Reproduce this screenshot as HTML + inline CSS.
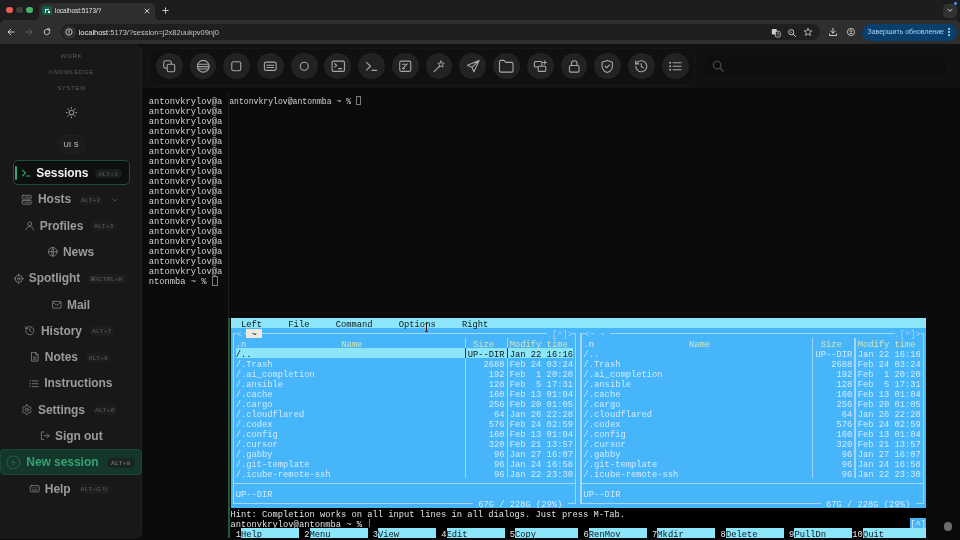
<!DOCTYPE html>
<html><head><meta charset="utf-8"><title>localhost:5173/?</title>
<style>
*{box-sizing:border-box;margin:0;padding:0}
html,body{width:960px;height:540px;overflow:hidden;background:#0b0b0b}
body{position:relative;font-family:"Liberation Sans",sans-serif;color:#ddd}
.abs{position:absolute}
.mono{font-family:"Liberation Mono",monospace;font-size:8.78px;line-height:10px;white-space:pre;letter-spacing:0}
#tabstrip{left:0;top:0;width:960px;height:20px;background:#1d1d1d}
#tab{left:38.7px;top:3.4px;width:116.6px;height:17px;background:#2e2e2e;border-radius:5px 5px 0 0}
#toolbar{left:0;top:20px;width:960px;height:24px;background:#2e2e2e;border-radius:4px 4px 0 0}
#url{left:61px;top:23.8px;width:758.5px;height:16.6px;background:#1f1f1f;border-radius:8.5px}
.tl{width:6.4px;height:6.4px;border-radius:50%;top:7px}
#sidebar{left:0;top:44px;width:142.4px;height:494.5px;background:#181818;border-radius:0 7px 7px 0;border-right:0.8px solid #212121}
.sec{font-size:6.1px;letter-spacing:0.6px;color:#5c5c5c;text-align:center;width:142px;left:0.5px}
.item{font-size:12px;font-weight:bold;color:#9a9a9a;white-space:nowrap;line-height:14px;letter-spacing:-0.05px}
.badge{font-size:6.1px;font-weight:bold;color:#505050;background:#1d1d1d;border-radius:5px;height:9.8px;line-height:10px;text-align:center;letter-spacing:0.25px;white-space:nowrap}
.ic{stroke:#8a8a8a;fill:none;stroke-width:1.6;stroke-linecap:round;stroke-linejoin:round}
.tb{width:26.8px;height:26.8px;border-radius:50%;background:#222;top:52.6px}
.tbi{stroke:#a6a6a6;fill:none;stroke-width:1.6;stroke-linecap:round;stroke-linejoin:round}
#wrap{position:absolute;left:0;top:0;width:960px;height:540px;overflow:hidden;filter:blur(0.45px)}
</style></head><body><div id="wrap">

<div id="tabstrip" class="abs"></div>
<div id="tab" class="abs"></div>
<div id="toolbar" class="abs"></div>
<div class="abs" style="left:34.6px;top:16px;width:4.2px;height:4.2px;background:radial-gradient(circle at 0 0,rgba(0,0,0,0) 4px,#2e2e2e 4.3px)"></div>
<div class="abs" style="left:155.2px;top:16px;width:4.2px;height:4.2px;background:radial-gradient(circle at 100% 0,rgba(0,0,0,0) 4px,#2e2e2e 4.3px)"></div>
<div class="abs tl" style="left:6.2px;background:#ec5f57"></div>
<div class="abs tl" style="left:16.3px;background:#3e3e3e"></div>
<div class="abs tl" style="left:26.3px;background:#42b863"></div>
<div class="abs" style="left:42.3px;top:5.8px;width:9.6px;height:9.2px;background:#135c48;border-radius:1.2px"></div>
<div class="abs" style="left:44.8px;top:9.1px;width:4.4px;height:1.3px;background:#e4f4f0"></div>
<div class="abs" style="left:44.8px;top:9.1px;width:1.3px;height:3.9px;background:#d4efe8"></div>
<div class="abs" style="left:47.9px;top:11.1px;width:1.8px;height:1.9px;background:#f0f0f0"></div>
<div class="abs" style="left:55px;top:6.5px;font-size:6.35px;color:#e4e4e4;line-height:8px;white-space:nowrap">localhost:5173/?</div>
<svg class="abs" style="left:143.5px;top:7.5px" width="6" height="6" viewBox="0 0 6 6"><path d="M1 1L5 5M5 1L1 5" stroke="#d8d8d8" stroke-width="0.9" stroke-linecap="round"/></svg>
<svg class="abs" style="left:161.5px;top:7px" width="7" height="7" viewBox="0 0 7 7"><path d="M3.5 0.8V6.2M0.8 3.5H6.2" stroke="#d8d8d8" stroke-width="0.9" stroke-linecap="round"/></svg>
<div class="abs" style="left:943.2px;top:3.8px;width:13.8px;height:13.8px;border-radius:4.5px;background:#323232"></div>
<svg class="abs" style="left:947.1px;top:8.3px" width="6" height="5" viewBox="0 0 6 5"><path d="M1 1.2L3 3.3L5 1.2" stroke="#e0e0e0" stroke-width="0.9" fill="none" stroke-linecap="round" stroke-linejoin="round"/></svg>
<div class="abs" style="left:954.4px;top:2.3px;width:2.3px;height:2.3px;border-radius:50%;background:#3d8fe8"></div>
<svg class="abs" style="left:7px;top:28px" width="8" height="8" viewBox="0 0 8 8"><path d="M7 4H1.2M3.8 1.2L1 4L3.8 6.8" stroke="#cfcfcf" stroke-width="1" fill="none" stroke-linecap="round" stroke-linejoin="round"/></svg>
<svg class="abs" style="left:25px;top:28px" width="8" height="8" viewBox="0 0 8 8"><path d="M1 4H6.8M4.2 1.2L7 4L4.2 6.8" stroke="#5e5e5e" stroke-width="1" fill="none" stroke-linecap="round" stroke-linejoin="round"/></svg>
<svg class="abs" style="left:43px;top:28px" width="8" height="8" viewBox="0 0 8 8"><path d="M6.6 4A2.7 2.7 0 1 1 5.6 1.9" stroke="#cfcfcf" stroke-width="1" fill="none" stroke-linecap="round"/><path d="M4.6 0.9H6.7V3" stroke="#cfcfcf" stroke-width="1" fill="none" stroke-linejoin="round" stroke-linecap="round"/></svg>
<div id="url" class="abs"></div>
<div class="abs" style="left:63px;top:26px;width:12.5px;height:12.5px;border-radius:50%;background:#303030"></div>
<svg class="abs" style="left:65.2px;top:28.2px" width="8" height="8" viewBox="0 0 8 8"><circle cx="4" cy="4" r="3.1" stroke="#dcdcdc" stroke-width="0.8" fill="none"/><path d="M4 2.5V4.3" stroke="#dcdcdc" stroke-width="0.8" stroke-linecap="round"/><circle cx="4" cy="5.5" r="0.45" fill="#dcdcdc"/></svg>
<div class="abs" style="left:78.7px;top:27.5px;font-size:7.47px;color:#c6c6c6;line-height:9px;white-space:nowrap"><span style="color:#ececec">localhost</span>:5173/?session=j2x82uukpv09nj0</div>
<svg class="abs" style="left:771px;top:27.5px" width="10" height="10" viewBox="0 0 10 10"><rect x="0.8" y="1" width="5" height="5.5" rx="0.8" fill="#cfcfcf"/><rect x="4.5" y="3.4" width="4.8" height="5.6" rx="0.8" fill="#2b2b2b" stroke="#cfcfcf" stroke-width="0.7"/><path d="M5.8 5.2H8M6.9 4.6V5.2M6 7.6C7 7 7.6 6.2 7.7 5.2" stroke="#cfcfcf" stroke-width="0.5" fill="none"/></svg>
<svg class="abs" style="left:787px;top:27.5px" width="10" height="10" viewBox="0 0 10 10"><circle cx="4.2" cy="4.2" r="2.6" stroke="#cfcfcf" stroke-width="0.9" fill="none"/><path d="M6.2 6.2L8.6 8.6" stroke="#cfcfcf" stroke-width="1" stroke-linecap="round"/><path d="M3.2 4.2H5.2" stroke="#cfcfcf" stroke-width="0.7"/></svg>
<svg class="abs" style="left:803px;top:27.2px" width="10" height="10" viewBox="0 0 10 10"><path d="M5 1.2L6.1 3.7L8.8 3.95L6.75 5.7L7.4 8.4L5 7L2.6 8.4L3.25 5.7L1.2 3.95L3.9 3.7Z" stroke="#cfcfcf" stroke-width="0.8" fill="none" stroke-linejoin="round"/></svg>
<svg class="abs" style="left:828px;top:27.2px" width="10" height="10" viewBox="0 0 10 10"><path d="M5 1.2V6M2.8 4L5 6.2L7.2 4M1.5 7V8.5H8.5V7" stroke="#cfcfcf" stroke-width="0.95" fill="none" stroke-linecap="round" stroke-linejoin="round"/></svg>
<svg class="abs" style="left:846px;top:27.2px" width="10" height="10" viewBox="0 0 10 10"><circle cx="5" cy="5" r="3.6" stroke="#cfcfcf" stroke-width="0.8" fill="none"/><circle cx="5" cy="4" r="1.2" stroke="#cfcfcf" stroke-width="0.7" fill="none"/><path d="M2.7 7.4C3.4 6.2 6.6 6.2 7.3 7.4" stroke="#cfcfcf" stroke-width="0.7" fill="none"/></svg>
<div class="abs" style="left:861.7px;top:23.6px;width:95.8px;height:17px;border-radius:8.5px;background:#0a3f6c"></div>
<div class="abs" style="left:867.5px;top:27.9px;font-size:6.95px;color:#a9d4fb;line-height:8.5px;white-space:nowrap;letter-spacing:0.02px">Завершить обновление</div>
<div class="abs" style="left:948.2px;top:28.1px;width:1.5px;height:1.5px;border-radius:50%;background:#a9d4fb;box-shadow:0 3px 0 #a9d4fb,0 6px 0 #a9d4fb"></div>
<div id="sidebar" class="abs"></div>
<div class="abs sec" style="top:52.1px">WORK</div>
<div class="abs sec" style="top:67.9px">KNOWLEDGE</div>
<div class="abs sec" style="top:84.3px">SYSTEM</div>
<svg class="abs" style="left:64.5px;top:106.3px" width="13" height="13" viewBox="0 0 24 24"><g stroke="#939393" stroke-width="1.9" fill="none" stroke-linecap="round"><circle cx="12" cy="12" r="4.300"/><path d="M19.80 12.00L21.60 12.00M17.52 17.52L18.79 18.79M12.00 19.80L12.00 21.60M6.48 17.52L5.21 18.79M4.20 12.00L2.40 12.00M6.48 6.48L5.21 5.21M12.00 4.20L12.00 2.40M17.52 6.48L18.79 5.21"/></g></svg>
<div class="abs" style="left:57px;top:135px;width:28.5px;height:19px;border-radius:9.5px;background:#1b1b1b;border:0.5px solid #222"></div>
<div class="abs" style="left:57px;top:140.5px;width:28.5px;text-align:center;font-size:7.3px;font-weight:bold;color:#9c9c9c;letter-spacing:0.3px;line-height:8px">UI S</div>
<div class="abs" style="left:13px;top:160.2px;width:116.5px;height:24.8px;border-radius:5px;background:#0e0f0f;border:1px solid #1f4d3a"></div>
<div class="abs" style="left:15.3px;top:165.5px;width:1.7px;height:14.5px;border-radius:1px;background:#35a873"></div>
<svg class="abs" style="left:21px;top:168px" width="10" height="10" viewBox="0 0 10 10"><path d="M1.5 2.2L4.5 5L1.5 7.8M5.6 8H9" stroke="#35a873" stroke-width="1.15" fill="none" stroke-linecap="round" stroke-linejoin="round"/></svg>
<div class="abs item" style="left:36.2px;top:166px;color:#f0f0f0">Sessions</div>
<div class="abs badge" style="left:94.5px;top:168.5px;width:27px;color:#4a4f4d;background:#1a1e1c">ALT+1</div>
<svg class="abs" style="left:21.2px;top:193.7px" width="11.5" height="11.5" viewBox="0 0 24 24"><g class="ic" stroke-width="2"><rect x="2.5" y="2.800" width="19" height="7.800" rx="1.800"/><rect x="2.5" y="13.400" width="19" height="7.800" rx="1.800"/><path d="M6.500 6.700h.01M6.500 17.300h.01M10 6.700h8M10 17.300h8" stroke-width="1.400"/></g></svg>
<div class="abs item" style="left:38.0px;top:192.3px;color:#9a9a9a">Hosts</div>
<div class="abs badge" style="left:78.0px;top:194.9px;width:25.0px">ALT+2</div>
<svg class="abs" style="left:112px;top:196.5px" width="6" height="6" viewBox="0 0 6 6"><path d="M1 2L3 4L5 2" stroke="#555" stroke-width="0.9" fill="none" stroke-linecap="round" stroke-linejoin="round"/></svg>
<svg class="abs" style="left:24.2px;top:219.9px" width="11.5" height="11.5" viewBox="0 0 24 24"><g class="ic" stroke-width="2"><circle cx="12" cy="8" r="4"/><path d="M4 21c0-4.5 3.5-7 8-7s8 2.5 8 7"/></g></svg>
<div class="abs item" style="left:39.7px;top:218.6px;color:#9a9a9a">Profiles</div>
<div class="abs badge" style="left:91.0px;top:221.2px;width:25.0px">ALT+3</div>
<svg class="abs" style="left:46.5px;top:246.2px" width="11.5" height="11.5" viewBox="0 0 24 24"><g class="ic" stroke-width="2"><circle cx="12" cy="12" r="9"/><path d="M3 12h18M12 3c3 3 3 15 0 18M12 3c-3 3-3 15 0 18"/></g></svg>
<div class="abs item" style="left:63.0px;top:244.9px;color:#9a9a9a">News</div>
<svg class="abs" style="left:13.1px;top:272.6px" width="11.5" height="11.5" viewBox="0 0 24 24"><g class="ic" stroke-width="2"><circle cx="12" cy="12" r="7.5"/><circle cx="12" cy="12" r="2.5"/><path d="M12 2v3M12 19v3M2 12h3M19 12h3"/></g></svg>
<div class="abs item" style="left:28.7px;top:271.2px;color:#9a9a9a">Spotlight</div>
<div class="abs badge" style="left:86.5px;top:273.8px;width:40.0px">⌘/CTRL+K</div>
<svg class="abs" style="left:51.2px;top:298.9px" width="11.5" height="11.5" viewBox="0 0 24 24"><g class="ic" stroke-width="2"><rect x="3" y="5" width="18" height="14" rx="2"/><path d="M3.5 7l8.5 6 8.5-6"/></g></svg>
<div class="abs item" style="left:67.0px;top:297.5px;color:#9a9a9a">Mail</div>
<svg class="abs" style="left:24.2px;top:325.1px" width="11.5" height="11.5" viewBox="0 0 24 24"><g class="ic" stroke-width="2"><path d="M3.5 12a8.5 8.5 0 1 0 2.6-6.1L3.5 8"/><path d="M3.5 3.5V8H8"/><path d="M12 7.5V12l3 2"/></g></svg>
<div class="abs item" style="left:41.0px;top:323.8px;color:#9a9a9a">History</div>
<div class="abs badge" style="left:89.0px;top:326.4px;width:25.0px">ALT+7</div>
<svg class="abs" style="left:29.2px;top:351.4px" width="11.5" height="11.5" viewBox="0 0 24 24"><g class="ic" stroke-width="2"><path d="M6 3h8l5 5v13H6z"/><path d="M14 3v5h5M9 13h6M9 17h6"/></g></svg>
<div class="abs item" style="left:44.8px;top:350.1px;color:#9a9a9a">Notes</div>
<div class="abs badge" style="left:85.5px;top:352.7px;width:25.0px">ALT+6</div>
<svg class="abs" style="left:27.8px;top:377.8px" width="11.5" height="11.5" viewBox="0 0 24 24"><g class="ic" stroke-width="2"><path d="M9 6h12M9 12h12M9 18h12M4 6h1.5M4 12h1.5M4 18h1.5"/></g></svg>
<div class="abs item" style="left:44.3px;top:376.4px;color:#9a9a9a">Instructions</div>
<svg class="abs" style="left:21.2px;top:404.1px" width="11.5" height="11.5" viewBox="0 0 24 24"><g class="ic" stroke-width="2"><path d="M12.22 2h-.44a2 2 0 0 0-2 2v.18a2 2 0 0 1-1 1.73l-.43.25a2 2 0 0 1-2 0l-.15-.08a2 2 0 0 0-2.73.73l-.22.38a2 2 0 0 0 .73 2.73l.15.1a2 2 0 0 1 1 1.72v.51a2 2 0 0 1-1 1.74l-.15.09a2 2 0 0 0-.73 2.73l.22.38a2 2 0 0 0 2.73.73l.15-.08a2 2 0 0 1 2 0l.43.25a2 2 0 0 1 1 1.73V20a2 2 0 0 0 2 2h.44a2 2 0 0 0 2-2v-.18a2 2 0 0 1 1-1.73l.43-.25a2 2 0 0 1 2 0l.15.08a2 2 0 0 0 2.73-.73l.22-.39a2 2 0 0 0-.73-2.73l-.15-.08a2 2 0 0 1-1-1.74v-.5a2 2 0 0 1 1-1.74l.15-.09a2 2 0 0 0 .73-2.73l-.22-.38a2 2 0 0 0-2.73-.73l-.15.08a2 2 0 0 1-2 0l-.43-.25a2 2 0 0 1-1-1.730V4a2 2 0 0 0-2-2z"/><circle cx="12" cy="12" r="3"/></g></svg>
<div class="abs item" style="left:38.0px;top:402.7px;color:#9a9a9a">Settings</div>
<div class="abs badge" style="left:92.0px;top:405.3px;width:25.0px">ALT+8</div>
<svg class="abs" style="left:38.9px;top:430.4px" width="11.5" height="11.5" viewBox="0 0 24 24"><g class="ic" stroke-width="2"><path d="M10 4H5v16h5"/><path d="M10 12h11M17 8l4 4-4 4"/></g></svg>
<div class="abs item" style="left:55.0px;top:429.0px;color:#9a9a9a">Sign out</div>
<div class="abs" style="left:0;top:449.3px;width:142px;height:25.5px;background:#15362a;border-radius:4px;border:0.5px solid #1b4634"></div>
<svg class="abs" style="left:6.1px;top:454.5px" width="14.800" height="14.800" viewBox="0 0 24 24"><g stroke="#216e4e" stroke-width="1.350" fill="none" stroke-linecap="round"><circle cx="12" cy="12" r="10.500"/><path d="M12 7.500v9M7.500 12h9"/></g></svg>
<div class="abs item" style="left:26.3px;top:455.3px;color:#32a271">New session</div>
<div class="abs badge" style="left:106.5px;top:457.9px;width:28px;color:#6e6e6e;background:#1a2420">ALT+9</div>
<svg class="abs" style="left:28.8px;top:482.9px" width="11.5" height="11.5" viewBox="0 0 24 24"><g class="ic" stroke-width="2"><rect x="2.500" y="5.500" width="19" height="13" rx="2.500"/><path d="M6.500 10h.01M10 10h.01M13.500 10h.01M17 10h.01M7 14.500h10"/></g></svg>
<div class="abs item" style="left:44.8px;top:481.6px;color:#9a9a9a">Help</div>
<div class="abs badge" style="left:78.0px;top:484.2px;width:32.0px">ALT+G U</div>
<div class="abs" style="left:142px;top:44px;width:818px;height:43.800px;background:#111111"></div>
<div class="abs" style="left:148px;top:47.5px;width:547px;height:38.500px;border-radius:9px;background:#101010;border:0.7px solid #171717"></div>
<div class="abs" style="left:705px;top:55.500px;width:241px;height:21.200px;border-radius:7px;background:#0e0e0e"></div>
<div class="abs tb" style="left:155.80px"></div>
<svg class="abs" style="left:160.95px;top:57.850px" width="16.500" height="16.500" viewBox="0 0 24 24"><g class="tbi"><rect x="4" y="4" width="11" height="11" rx="2.500"/><rect x="9" y="9" width="11" height="11" rx="2.500" fill="#222"/></g></svg>
<div class="abs tb" style="left:189.53px"></div>
<svg class="abs" style="left:194.68px;top:57.850px" width="16.500" height="16.500" viewBox="0 0 24 24"><g class="tbi"><circle cx="12" cy="12" r="8.500"/><path d="M4.500 9h15M3.600 12.500h16.800M5 16h14"/></g></svg>
<div class="abs tb" style="left:223.26px"></div>
<svg class="abs" style="left:228.41px;top:57.850px" width="16.500" height="16.500" viewBox="0 0 24 24"><g class="tbi"><rect x="5.500" y="5.500" width="13" height="13" rx="2.500"/></g></svg>
<div class="abs tb" style="left:256.99px"></div>
<svg class="abs" style="left:262.14px;top:57.850px" width="16.500" height="16.500" viewBox="0 0 24 24"><g class="tbi"><rect x="3.500" y="6" width="17" height="12" rx="2.500"/><path d="M7 10.500h10M7 13.800h10"/></g></svg>
<div class="abs tb" style="left:290.72px"></div>
<svg class="abs" style="left:295.87px;top:57.850px" width="16.500" height="16.500" viewBox="0 0 24 24"><g class="tbi"><circle cx="12" cy="12" r="5.800"/></g></svg>
<div class="abs tb" style="left:324.45px"></div>
<svg class="abs" style="left:329.60px;top:57.850px" width="16.500" height="16.500" viewBox="0 0 24 24"><g class="tbi"><rect x="3" y="4.500" width="18" height="15" rx="2"/><path d="M6.800 8.300l3 2.500-3 2.500M12.500 15.500h4.500"/></g></svg>
<div class="abs tb" style="left:358.18px"></div>
<svg class="abs" style="left:363.33px;top:57.850px" width="16.500" height="16.500" viewBox="0 0 24 24"><g class="tbi"><path d="M5 6.500l6 5.500-6 5.500M13 18h7"/></g></svg>
<div class="abs tb" style="left:391.91px"></div>
<svg class="abs" style="left:397.06px;top:57.850px" width="16.500" height="16.500" viewBox="0 0 24 24"><g class="tbi"><rect x="4" y="4.500" width="16" height="15" rx="2.500"/><path d="M8 15.500l7-7M8 15.500h3M8 9h4"/></g></svg>
<div class="abs tb" style="left:425.64px"></div>
<svg class="abs" style="left:430.79px;top:57.850px" width="16.500" height="16.500" viewBox="0 0 24 24"><g class="tbi"><path d="M4.500 19.800L11.300 12.900"/><path d="M14.60 4.40L15.89 7.52L19.26 7.79L16.69 9.98L17.48 13.26L14.60 11.50L11.72 13.26L12.51 9.98L9.94 7.79L13.31 7.52z" stroke-width="1.400"/></g></svg>
<div class="abs tb" style="left:459.37px"></div>
<svg class="abs" style="left:464.52px;top:57.850px" width="16.500" height="16.500" viewBox="0 0 24 24"><g class="tbi"><path d="M20.500 3.500L3.500 10.500l6.500 3 3 6.500zM10 13.500l10.500-10"/></g></svg>
<div class="abs tb" style="left:493.10px"></div>
<svg class="abs" style="left:498.25px;top:57.850px" width="16.500" height="16.500" viewBox="0 0 24 24"><g class="tbi"><path d="M2.200 5.500a2 2 0 0 1 2-2h4.500l2.500 2.800h8.600a2 2 0 0 1 2 2v10.200a2 2 0 0 1-2 2h-15.600a2 2 0 0 1-2-2z"/></g></svg>
<div class="abs tb" style="left:526.83px"></div>
<svg class="abs" style="left:531.98px;top:57.850px" width="16.500" height="16.500" viewBox="0 0 24 24"><g class="tbi"><rect x="3.500" y="5" width="11" height="8" rx="1.500"/><rect x="9" y="12" width="11" height="7.500" rx="1.500" fill="#222"/><path d="M18.500 4v5M16 6.500h5"/></g></svg>
<div class="abs tb" style="left:560.56px"></div>
<svg class="abs" style="left:565.71px;top:57.850px" width="16.500" height="16.500" viewBox="0 0 24 24"><g class="tbi"><rect x="5" y="11" width="14" height="9.500" rx="2"/><path d="M8 11V8a4 4 0 0 1 8 0v3"/></g></svg>
<div class="abs tb" style="left:594.29px"></div>
<svg class="abs" style="left:599.44px;top:57.850px" width="16.500" height="16.500" viewBox="0 0 24 24"><g class="tbi"><path d="M12 3.500l7.500 2.800v5.200c0 4.500-3 8-7.500 9.500-4.500-1.500-7.500-5-7.500-9.500V6.300z"/><path d="M9 12l2.200 2.200L15.200 10"/></g></svg>
<div class="abs tb" style="left:628.02px"></div>
<svg class="abs" style="left:633.17px;top:57.850px" width="16.500" height="16.500" viewBox="0 0 24 24"><g class="tbi"><path d="M4 12a8 8 0 1 0 2.500-5.800L4 8.500"/><path d="M4 4v4.500h4.500"/><path d="M12 8v4.500l3 1.800"/></g></svg>
<div class="abs tb" style="left:661.75px"></div>
<svg class="abs" style="left:666.90px;top:57.850px" width="16.500" height="16.500" viewBox="0 0 24 24"><g class="tbi"><path d="M8.800 7h11.700M8.800 12h11.700M8.800 17h11.700"/><circle cx="4.600" cy="7" r="0.700" fill="#a4a4a4"/><circle cx="4.600" cy="12" r="0.700" fill="#a4a4a4"/><circle cx="4.600" cy="17" r="0.700" fill="#a4a4a4"/></g></svg>
<svg class="abs" style="left:711.200px;top:59.100px" width="14" height="14" viewBox="0 0 24 24"><g stroke="#484848" stroke-width="2.1" fill="none" stroke-linecap="round"><circle cx="10.500" cy="10.500" r="6.500"/><path d="M15.500 15.500L21 21"/></g></svg>
<div class="abs mono" style="left:148.7px;top:97.2px;color:#d2d2d2">antonvkrylov@a
antonvkrylov@a
antonvkrylov@a
antonvkrylov@a
antonvkrylov@a
antonvkrylov@a
antonvkrylov@a
antonvkrylov@a
antonvkrylov@a
antonvkrylov@a
antonvkrylov@a
antonvkrylov@a
antonvkrylov@a
antonvkrylov@a
antonvkrylov@a
antonvkrylov@a
antonvkrylov@a
antonvkrylov@a
ntonmba ~ % </div>
<div class="abs" style="left:212.3px;top:276px;width:5.4px;height:9.500px;border:0.8px solid #7d7d7d"></div>
<div class="abs" style="left:227.7px;top:93px;width:1.1px;height:225.5px;background:#1e1e1e"></div>
<div class="abs mono" style="left:229.2px;top:97.3px;color:#d2d2d2;font-size:8.13px">antonvkrylov@antonmba ~ % </div>
<div class="abs" style="left:356.1px;top:95.700px;width:5.2px;height:9.500px;border:0.8px solid #7d7d7d"></div>
<div class="abs" style="left:228px;top:318.300px;width:2.300px;height:220px;background:#1d5a38"></div>
<div class="abs" style="left:230.50px;top:328.30px;width:695.64px;height:180.00px;background:#46b5fa"></div>
<div class="abs" style="left:230.50px;top:318.30px;width:695.64px;height:10.20px;background:#8ce5f8"></div>
<div class="abs mono" style="left:230.50px;top:319.70px;color:#0c1a22">  Left     File     Command     Options     Right</div>
<div class="abs" style="left:233.23px;top:333.35px;width:1.100px;height:171.00px;background:#a3d6f9"></div>
<div class="abs" style="left:575.18px;top:333.35px;width:1.100px;height:171.00px;background:#a3d6f9"></div>
<div class="abs" style="left:233.23px;top:333.35px;width:3.54px;height:1.100px;background:#a3d6f9"></div>
<div class="abs" style="left:243.54px;top:333.35px;width:2.77px;height:1.100px;background:#a3d6f9"></div>
<div class="abs" style="left:262.12px;top:333.35px;width:284.58px;height:1.100px;background:#a3d6f9"></div>
<div class="abs" style="left:573.05px;top:333.35px;width:3.13px;height:1.100px;background:#a3d6f9"></div>
<div class="abs" style="left:233.23px;top:483.35px;width:341.95px;height:1.100px;background:#a3d6f9"></div>
<div class="abs" style="left:233.23px;top:503.35px;width:239.68px;height:1.100px;background:#a3d6f9"></div>
<div class="abs" style="left:567.78px;top:503.35px;width:8.40px;height:1.100px;background:#a3d6f9"></div>
<div class="abs" style="left:464.51px;top:338.30px;width:1.100px;height:140.00px;background:#a3d6f9"></div>
<div class="abs" style="left:506.67px;top:338.30px;width:1.100px;height:140.00px;background:#a3d6f9"></div>
<div class="abs mono" style="left:236.77px;top:329.70px;color:#a3d6f9">&lt;</div>
<div class="abs mono" style="left:546.70px;top:329.70px;color:#a3d6f9">.[^]&gt;</div>
<div class="abs" style="left:246.31px;top:328.70px;width:15.81px;height:9.40px;background:#ece9e2"></div>
<div class="abs mono" style="left:246.31px;top:329.70px;color:#111"> ~ </div>
<div class="abs mono" style="left:235.77px;top:339.70px;color:#d6eafa">.n</div>
<div class="abs mono" style="left:341.17px;top:339.70px;color:#d6e5b6">Name</div>
<div class="abs mono" style="left:472.92px;top:339.70px;color:#d6e5b6">Size</div>
<div class="abs mono" style="left:509.81px;top:339.70px;color:#d6e5b6">Modify time</div>
<div class="abs" style="left:235.77px;top:348.30px;width:337.28px;height:10.00px;background:#8ce5f8"></div>
<div class="abs" style="left:464.51px;top:348.30px;width:1.100px;height:10.00px;background:#1f3c4a"></div>
<div class="abs" style="left:506.67px;top:348.30px;width:1.100px;height:10.00px;background:#1f3c4a"></div>
<div class="abs mono" style="left:235.77px;top:349.70px;color:#d6eafa"><span style="color:#0c1a22">/..</span>
/.Trash
/.ai_completion
/.ansible
/.cache
/.cargo
/.cloudflared
/.codex
/.config
/.cursor
/.gabby
/.git-template
/.icube-remote-ssh</div>
<div class="abs mono" style="left:467.65px;top:349.70px;color:#d6eafa"><span style="color:#0c1a22">UP--DIR</span>
   2688
    192
    128
    160
    256
     64
    576
    160
    320
     96
     96
     96</div>
<div class="abs mono" style="left:509.81px;top:349.70px;color:#d6eafa"><span style="color:#0c1a22">Jan 22 16:16</span>
Feb 24 03:24
Feb  1 20:20
Feb  5 17:31
Feb 13 01:04
Feb 20 01:05
Jan 26 22:28
Feb 24 02:59
Feb 13 01:04
Feb 21 13:57
Jan 27 16:07
Jan 24 16:58
Jan 22 23:30</div>
<div class="abs mono" style="left:235.77px;top:489.70px;color:#d6eafa">UP--DIR</div>
<div class="abs mono" style="left:472.92px;top:499.70px;color:#d6eafa"> 67G / 228G (29%) </div>
<div class="abs" style="left:580.45px;top:333.35px;width:1.100px;height:171.00px;background:#a3d6f9"></div>
<div class="abs" style="left:923.00px;top:333.35px;width:1.100px;height:171.00px;background:#a3d6f9"></div>
<div class="abs" style="left:580.45px;top:333.35px;width:4.13px;height:1.100px;background:#a3d6f9"></div>
<div class="abs" style="left:591.36px;top:333.35px;width:2.77px;height:1.100px;background:#a3d6f9"></div>
<div class="abs" style="left:609.94px;top:333.35px;width:284.58px;height:1.100px;background:#a3d6f9"></div>
<div class="abs" style="left:920.87px;top:333.35px;width:3.13px;height:1.100px;background:#a3d6f9"></div>
<div class="abs" style="left:580.45px;top:483.35px;width:342.55px;height:1.100px;background:#a3d6f9"></div>
<div class="abs" style="left:580.45px;top:503.35px;width:240.29px;height:1.100px;background:#a3d6f9"></div>
<div class="abs" style="left:915.60px;top:503.35px;width:8.40px;height:1.100px;background:#a3d6f9"></div>
<div class="abs" style="left:812.33px;top:338.30px;width:1.100px;height:140.00px;background:#a3d6f9"></div>
<div class="abs" style="left:854.49px;top:338.30px;width:1.100px;height:140.00px;background:#a3d6f9"></div>
<div class="abs mono" style="left:584.59px;top:329.70px;color:#a3d6f9">&lt;</div>
<div class="abs mono" style="left:894.52px;top:329.70px;color:#a3d6f9">.[^]&gt;</div>
<div class="abs mono" style="left:594.13px;top:329.70px;color:#a3d6f9"> ~ </div>
<div class="abs mono" style="left:583.59px;top:339.70px;color:#d6eafa">.n</div>
<div class="abs mono" style="left:688.99px;top:339.70px;color:#d6e5b6">Name</div>
<div class="abs mono" style="left:820.74px;top:339.70px;color:#d6e5b6">Size</div>
<div class="abs mono" style="left:857.63px;top:339.70px;color:#d6e5b6">Modify time</div>
<div class="abs mono" style="left:583.59px;top:349.70px;color:#d6eafa">/..
/.Trash
/.ai_completion
/.ansible
/.cache
/.cargo
/.cloudflared
/.codex
/.config
/.cursor
/.gabby
/.git-template
/.icube-remote-ssh</div>
<div class="abs mono" style="left:815.47px;top:349.70px;color:#d6eafa">UP--DIR
   2688
    192
    128
    160
    256
     64
    576
    160
    320
     96
     96
     96</div>
<div class="abs mono" style="left:857.63px;top:349.70px;color:#d6eafa">Jan 22 16:16
Feb 24 03:24
Feb  1 20:20
Feb  5 17:31
Feb 13 01:04
Feb 20 01:05
Jan 26 22:28
Feb 24 02:59
Feb 13 01:04
Feb 21 13:57
Jan 27 16:07
Jan 24 16:58
Jan 22 23:30</div>
<div class="abs mono" style="left:583.59px;top:489.70px;color:#d6eafa">UP--DIR</div>
<div class="abs mono" style="left:820.74px;top:499.70px;color:#d6eafa"> 67G / 228G (29%) </div>
<div class="abs" style="left:230.50px;top:508.30px;width:695.64px;height:30.00px;background:#010101"></div>
<div class="abs mono" style="left:230.50px;top:509.70px;color:#e2e2e2">Hint: Completion works on all input lines in all dialogs. Just press M-Tab.
antonvkrylov@antonmba ~ % </div>
<div class="abs" style="left:369.02px;top:519.30px;width:0.800px;height:8px;background:#777"></div>
<div class="abs" style="left:910.33px;top:518.30px;width:15.81px;height:10.00px;background:#46b5fa"></div>
<div class="abs mono" style="left:910.33px;top:519.70px;color:#d6eafa">[^]</div>
<div class="abs mono" style="left:230.50px;top:529.70px;color:#e8e8e8"> 1</div>
<div class="abs" style="left:241.04px;top:528.30px;width:57.97px;height:10.00px;background:#8ce5f8"></div>
<div class="abs mono" style="left:241.04px;top:529.70px;color:#0c1a22">Help</div>
<div class="abs mono" style="left:299.01px;top:529.70px;color:#e8e8e8"> 2</div>
<div class="abs" style="left:309.55px;top:528.30px;width:57.97px;height:10.00px;background:#8ce5f8"></div>
<div class="abs mono" style="left:309.55px;top:529.70px;color:#0c1a22">Menu</div>
<div class="abs mono" style="left:367.52px;top:529.70px;color:#e8e8e8"> 3</div>
<div class="abs" style="left:378.06px;top:528.30px;width:57.97px;height:10.00px;background:#8ce5f8"></div>
<div class="abs mono" style="left:378.06px;top:529.70px;color:#0c1a22">View</div>
<div class="abs mono" style="left:436.03px;top:529.70px;color:#e8e8e8"> 4</div>
<div class="abs" style="left:446.57px;top:528.30px;width:57.97px;height:10.00px;background:#8ce5f8"></div>
<div class="abs mono" style="left:446.57px;top:529.70px;color:#0c1a22">Edit</div>
<div class="abs mono" style="left:504.54px;top:529.70px;color:#e8e8e8"> 5</div>
<div class="abs" style="left:515.08px;top:528.30px;width:63.24px;height:10.00px;background:#8ce5f8"></div>
<div class="abs mono" style="left:515.08px;top:529.70px;color:#0c1a22">Copy</div>
<div class="abs mono" style="left:578.32px;top:529.70px;color:#e8e8e8"> 6</div>
<div class="abs" style="left:588.86px;top:528.30px;width:57.97px;height:10.00px;background:#8ce5f8"></div>
<div class="abs mono" style="left:588.86px;top:529.70px;color:#0c1a22">RenMov</div>
<div class="abs mono" style="left:646.83px;top:529.70px;color:#e8e8e8"> 7</div>
<div class="abs" style="left:657.37px;top:528.30px;width:57.97px;height:10.00px;background:#8ce5f8"></div>
<div class="abs mono" style="left:657.37px;top:529.70px;color:#0c1a22">Mkdir</div>
<div class="abs mono" style="left:715.34px;top:529.70px;color:#e8e8e8"> 8</div>
<div class="abs" style="left:725.88px;top:528.30px;width:57.97px;height:10.00px;background:#8ce5f8"></div>
<div class="abs mono" style="left:725.88px;top:529.70px;color:#0c1a22">Delete</div>
<div class="abs mono" style="left:783.85px;top:529.70px;color:#e8e8e8"> 9</div>
<div class="abs" style="left:794.39px;top:528.30px;width:57.97px;height:10.00px;background:#8ce5f8"></div>
<div class="abs mono" style="left:794.39px;top:529.70px;color:#0c1a22">PullDn</div>
<div class="abs mono" style="left:852.36px;top:529.70px;color:#e8e8e8">10</div>
<div class="abs" style="left:862.90px;top:528.30px;width:63.24px;height:10.00px;background:#8ce5f8"></div>
<div class="abs mono" style="left:862.90px;top:529.70px;color:#0c1a22">Quit</div>
<div class="abs" style="left:943.900px;top:522.400px;width:8.600px;height:8.600px;border-radius:50%;background:#6c6c6c"></div>
<div class="abs" style="left:426.400px;top:323px;width:0.900px;height:8.200px;background:#3a1a14"></div>
<div class="abs" style="left:425.300px;top:330.600px;width:3.100px;height:0.800px;background:#4a2a22"></div>
<div class="abs" style="left:425.300px;top:322.800px;width:3.100px;height:0.700px;background:#3a2a28;opacity:0.6"></div>
</div></body></html>
